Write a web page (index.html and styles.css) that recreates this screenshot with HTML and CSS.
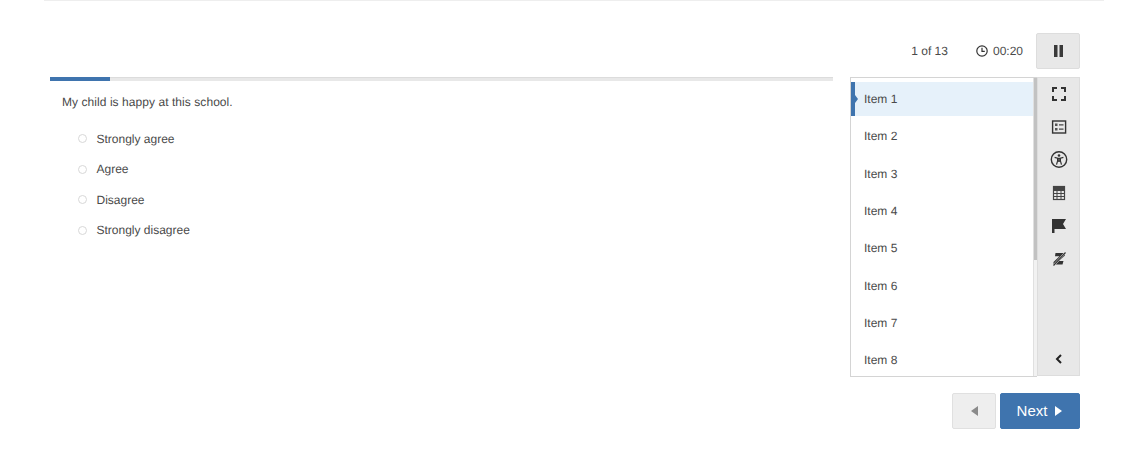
FILE: index.html
```html
<!DOCTYPE html>
<html lang="en">

<head>
    <meta charset="UTF-8" />
    <title>Survey</title>
    <link rel="stylesheet" href="styles.css">
</head>

<body>
    <main class="page">
        <div class="status-bar">
            <span class="item-count">1 of 13</span>
            <span class="timer">
                <svg viewBox="0 0 12 12" width="12" height="12">
                    <circle cx="6" cy="6" r="5.2" fill="none" stroke="#333" stroke-width="1.2" />
                    <path d="M6 2.8v3.6h2.8" fill="none" stroke="#333" stroke-width="1.2" />
                </svg>
                00:20
            </span>
            <button class="btn-pause" type="button" aria-label="Pause">
                <svg viewBox="0 0 9 12" width="9" height="12">
                    <rect x="0" y="0" width="3.5" height="12" fill="#3a3a3a" />
                    <rect x="5.5" y="0" width="3.5" height="12" fill="#3a3a3a" />
                </svg>
            </button>
        </div>

        <div class="content">
            <section class="question">
                <div class="progress">
                    <div class="progress-fill"></div>
                </div>
                <p class="prompt">My child is happy at this school.</p>
                <ul class="choices">
                    <li><span class="radio"></span>Strongly agree</li>
                    <li><span class="radio"></span>Agree</li>
                    <li><span class="radio"></span>Disagree</li>
                    <li><span class="radio"></span>Strongly disagree</li>
                </ul>
            </section>

            <aside class="item-panel">
                <ul class="item-list">
                    <li class="active">Item 1</li>
                    <li>Item 2</li>
                    <li>Item 3</li>
                    <li>Item 4</li>
                    <li>Item 5</li>
                    <li>Item 6</li>
                    <li>Item 7</li>
                    <li>Item 8</li>
                </ul>
                <div class="scroll-track"><div class="scroll-thumb"></div></div>
            </aside>

            <nav class="toolbar">
                <span class="tool">
                    <svg viewBox="0 0 16 16" width="16" height="16">
                        <path d="M2 6V2h4M10 2h4v4M14 10v4h-4M6 14H2v-4" fill="none" stroke="#333" stroke-width="2" />
                    </svg>
                </span>
                <span class="tool">
                    <svg viewBox="0 0 16 16" width="16" height="16">
                        <rect x="1.6" y="2" width="13" height="12" fill="none" stroke="#333" stroke-width="1.4" />
                        <rect x="4" y="4.5" width="2.5" height="2.5" fill="#555" />
                        <rect x="4" y="9" width="2.5" height="2.5" fill="#555" />
                        <path d="M8 5.8h4.5M8 10.2h4.5" stroke="#444" stroke-width="1.2" />
                    </svg>
                </span>
                <span class="tool">
                    <svg viewBox="0 0 18 18" width="18" height="18">
                        <circle cx="9" cy="8.500" r="7.700" fill="none" stroke="#333" stroke-width="1.4" />
                        <circle cx="9" cy="4.500" r="1.3" fill="#333" />
                        <path d="M4.6 6.400L7.600 7.300V9.900L6.500 13.700M13.400 6.400L10.400 7.300V9.900L11.500 13.700M7.600 7.300H10.400M7.600 9.900L9 10.300L10.400 9.900M9 7.500V10.300" fill="none" stroke="#333" stroke-width="1.2" />
                    </svg>
                </span>
                <span class="tool">
                    <svg viewBox="0 0 16 16" width="16" height="16">
                        <rect x="2.5" y="1.5" width="11" height="13" fill="none" stroke="#444" stroke-width="1.2" />
                        <rect x="2.5" y="1.5" width="11" height="4.5" fill="#444" />
                        <path d="M2.500 8.500h11M2.500 11.500h11M6 6v8M10 6v8" stroke="#444" stroke-width="1" />
                    </svg>
                </span>
                <span class="tool">
                    <svg viewBox="0 0 16 16" width="16" height="16">
                        <path d="M1 1h14l-3 5 3 5H3.500v4H1z" fill="#333" />
                    </svg>
                </span>
                <span class="tool">
                    <svg viewBox="0 0 16 16" width="16" height="16">
                        <path d="M4.500 2h9.500v2.500l-6 5.500h4.500l-1 3.500H2.500v-2.500l6-5.700H4z" fill="#333" />
                        <path d="M2.500 14.500L14.500 1.500" stroke="#e8e8e8" stroke-width="2" />
                        <path d="M2.500 14.500L14.500 1.500" stroke="#333" stroke-width="1.2" />
                    </svg>
                </span>
                <svg class="collapse" viewBox="0 0 10 12" width="10" height="12">
                    <path d="M7 2L3 6l4 4" fill="none" stroke="#222" stroke-width="2" />
                </svg>
            </nav>
        </div>

        <div class="actions">
            <button class="btn-prev" type="button" aria-label="Previous"><span class="arrow-left"></span></button>
            <button class="btn-next" type="button">Next<span class="arrow-right"></span></button>
        </div>
    </main>
</body>

</html>
```
FILE: styles.css
```css
html,
body {
    margin: 0;
    padding: 0;
    background: #ffffff;
}

body {
    font-family: "Liberation Sans", Arial, sans-serif;
    font-size: 12px;
    color: #4a4a4a;
    text-rendering: geometricPrecision;
}

.page {
    width: 1060px;
    margin-left: 44px;
    border-top: 1px solid #eeeeee;
    padding: 32px 24px 0 6px;
    box-sizing: border-box;
}

.status-bar {
    display: flex;
    justify-content: flex-end;
    align-items: center;
    height: 36px;
    margin-bottom: 8px;
}

.item-count {
    margin-right: 28px;
}

.timer {
    display: flex;
    align-items: center;
    gap: 5px;
    margin-right: 13px;
}

.btn-pause {
    display: flex;
    align-items: center;
    justify-content: center;
    width: 44px;
    height: 36px;
    padding: 0;
    background: #e8e8e8;
    border: 1px solid #dddddd;
    border-radius: 2px;
}

.content {
    display: flex;
    align-items: flex-start;
    height: 300px;
}

.question {
    width: 783px;
    margin-right: 17px;
}

.progress {
    height: 4px;
    background: #e8e8e8;
    box-shadow: inset 0 1px #dcdcdc;
}

.progress-fill {
    width: 60px;
    height: 4px;
    background: #3f74ae;
}

.prompt {
    margin: 14px 0 0 12px;
    line-height: 14px;
    letter-spacing: 0.06px;
}

.choices {
    list-style: none;
    margin: 14.8px 0 0 28px;
    padding: 0;
}

.choices li {
    display: flex;
    align-items: center;
    height: 30.4px;
}

.radio {
    width: 7px;
    height: 7px;
    margin-right: 9.5px;
    border: 1.5px solid #d8d8d8;
    border-radius: 50%;
}

.item-panel {
    display: flex;
    width: 187px;
    height: 300px;
    box-sizing: border-box;
    border: 1px solid #d4d4d4;
    border-right: none;
    overflow: hidden;
}

.item-list {
    flex: 1;
    list-style: none;
    margin: 0;
    padding: 4px 0 0;
}

.item-list li {
    display: flex;
    align-items: center;
    height: 37.35px;
    padding-left: 13px;
}

.item-list li.active {
    position: relative;
    height: 34px;
    margin-bottom: 1.5px;
    padding-left: 9px;
    background: #e6f1fa;
    border-left: 4px solid #3f74ae;
}

.item-list li.active::before {
    content: "";
    position: absolute;
    left: 0;
    top: 13px;
    border-left: 3px solid #3f74ae;
    border-top: 4px solid transparent;
    border-bottom: 4px solid transparent;
}

.scroll-track {
    width: 4px;
    background: #f2f2f2;
    border-left: 1px solid #e0e0e0;
    box-sizing: border-box;
}

.scroll-thumb {
    height: 182px;
    background: #c2c2c2;
}

.toolbar {
    display: flex;
    flex-direction: column;
    align-items: center;
    gap: 1px;
    width: 43px;
    height: 299px;
    box-sizing: border-box;
    background: #e8e8e8;
    border: 1px solid #dddddd;
}

.tool {
    display: flex;
    align-items: center;
    justify-content: center;
    height: 32px;
}

.toolbar .collapse {
    margin-top: auto;
    margin-bottom: 10px;
}

.actions {
    display: flex;
    justify-content: flex-end;
    gap: 4px;
    margin-top: 16px;
}

.btn-prev,
.btn-next {
    display: flex;
    align-items: center;
    justify-content: center;
    height: 36px;
    padding: 0;
    border-radius: 2px;
    font-family: inherit;
}

.btn-prev {
    width: 44px;
    background: #eeeeee;
    border: 1px solid #e0e0e0;
}

.btn-next {
    width: 80px;
    padding: 0 1px 1px 0;
    background: #3f74ae;
    border: 1px solid #3f74ae;
    color: #ffffff;
    font-size: 15px;
}

.arrow-left {
    border-right: 7px solid #8a8a8a;
    border-top: 5.5px solid transparent;
    border-bottom: 5.5px solid transparent;
}

.arrow-right {
    margin: 1px 0 0 8px;
    border-left: 7px solid #ffffff;
    border-top: 5.5px solid transparent;
    border-bottom: 5.5px solid transparent;
}
```
